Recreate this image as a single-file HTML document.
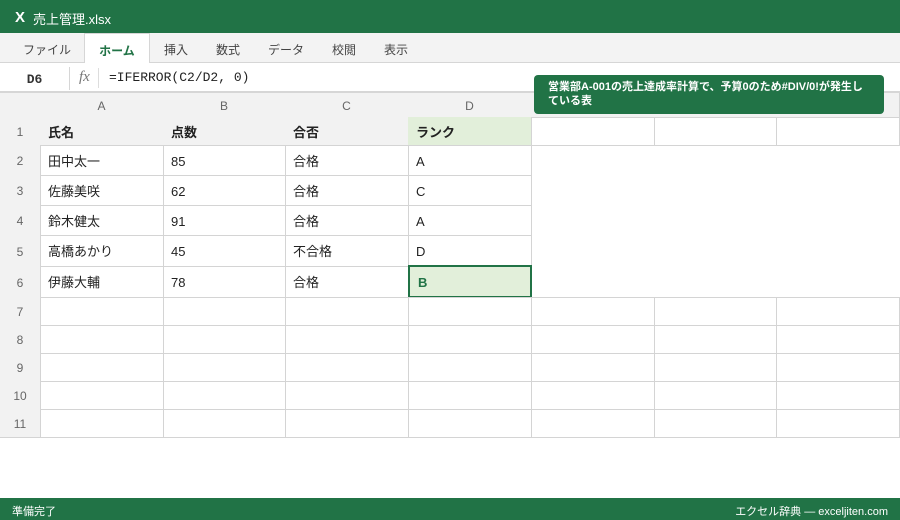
<!DOCTYPE html>
<html><head><meta charset="utf-8"><style>
*{margin:0;padding:0;box-sizing:border-box}
body{width:900px;height:520px;position:relative;overflow:hidden;background:#fff;font-family:"Liberation Sans","Noto Sans CJK JP",sans-serif;color:#333}
.a{position:absolute}
.c{position:absolute;border-right:1px solid #d4d4d4;border-bottom:1px solid #d4d4d4;font-size:13px;line-height:1;display:flex;align-items:center;padding-left:8px;padding-top:2px;color:#222}
.h{background:#f2f2f2;justify-content:center;padding-left:0;color:#666;font-size:12px}
.b{font-weight:bold;background:#f2f2f2}
.m{font-family:"Liberation Mono","Noto Sans CJK JP",monospace}
</style></head><body>
<div class="a" style="left:0;top:0;width:900px;height:33px;background:#217346;color:#fff;font-size:13px">
<span class="a" style="left:15px;top:9px;font-weight:bold;font-size:15px">X</span>
<span class="a" style="left:33px;top:9px">売上管理.xlsx</span></div>
<div class="a" style="left:0;top:33px;width:900px;height:30px;background:#f3f3f3;border-bottom:1px solid #d6d6d6;font-size:12px;color:#444">
<span class="a" style="left:23px;top:8px">ファイル</span>
<div class="a" style="left:84px;top:0;width:66px;height:31px;background:#fff;border:1px solid #d6d6d6;border-bottom:none;color:#217346;font-weight:bold;text-align:center;padding-top:8px">ホーム</div>
<span class="a" style="left:164px;top:8px">挿入</span>
<span class="a" style="left:216px;top:8px">数式</span>
<span class="a" style="left:268px;top:8px">データ</span>
<span class="a" style="left:332px;top:8px">校閲</span>
<span class="a" style="left:384px;top:8px">表示</span></div>
<div class="a" style="left:0;top:63px;width:900px;height:30px;background:#fff;border-bottom:2px solid #d6d6d6">
<div class="a m" style="left:0;top:4px;width:70px;height:23px;border-right:1px solid #d6d6d6;text-align:center;font-weight:bold;font-size:13px;padding-top:5px">D6</div>
<span class="a" style="left:79px;top:6px;font-style:italic;color:#777;font-size:15px;font-family:'Liberation Serif',serif">fx</span>
<div class="a" style="left:98px;top:5px;width:1px;height:20px;background:#ddd"></div>
<span class="a m" style="left:109px;top:7px;font-size:13px;color:#222">=IFERROR(C2/D2, 0)</span></div>
<div class="a" style="left:0;top:93px;width:900px;height:1px;background:#d4d4d4"></div>
<div class="a" style="left:0;top:93px;width:1px;height:345px;background:#d4d4d4"></div>
<div class="c h" style="left:0;top:93px;width:41px;height:25px"></div>
<div class="c h" style="left:40px;top:93px;width:124px;height:25px">A</div>
<div class="c h" style="left:163px;top:93px;width:123px;height:25px">B</div>
<div class="c h" style="left:285px;top:93px;width:124px;height:25px">C</div>
<div class="c h" style="left:408px;top:93px;width:124px;height:25px">D</div>
<div class="c h" style="left:531px;top:93px;width:124px;height:25px">E</div>
<div class="c h" style="left:654px;top:93px;width:123px;height:25px">F</div>
<div class="c h" style="left:776px;top:93px;width:124px;height:25px">G</div>
<div class="c h" style="left:0;top:117px;width:41px;height:29px">1</div>
<div class="c b" style="left:40px;top:117px;width:124px;height:29px">氏名</div>
<div class="c b" style="left:163px;top:117px;width:123px;height:29px">点数</div>
<div class="c b" style="left:285px;top:117px;width:124px;height:29px">合否</div>
<div class="c b" style="left:408px;top:117px;width:124px;height:29px;background:#e2efda">ランク</div>
<div class="c" style="left:531px;top:117px;width:124px;height:29px"></div>
<div class="c" style="left:654px;top:117px;width:123px;height:29px"></div>
<div class="c" style="left:776px;top:117px;width:124px;height:29px"></div>
<div class="c h" style="left:0;top:145px;width:41px;height:31px">2</div>
<div class="c" style="left:40px;top:145px;width:124px;height:31px">田中太一</div>
<div class="c" style="left:163px;top:145px;width:123px;height:31px">85</div>
<div class="c" style="left:285px;top:145px;width:124px;height:31px">合格</div>
<div class="c" style="left:408px;top:145px;width:124px;height:31px">A</div>
<div class="c h" style="left:0;top:175px;width:41px;height:31px">3</div>
<div class="c" style="left:40px;top:175px;width:124px;height:31px">佐藤美咲</div>
<div class="c" style="left:163px;top:175px;width:123px;height:31px">62</div>
<div class="c" style="left:285px;top:175px;width:124px;height:31px">合格</div>
<div class="c" style="left:408px;top:175px;width:124px;height:31px">C</div>
<div class="c h" style="left:0;top:205px;width:41px;height:31px">4</div>
<div class="c" style="left:40px;top:205px;width:124px;height:31px">鈴木健太</div>
<div class="c" style="left:163px;top:205px;width:123px;height:31px">91</div>
<div class="c" style="left:285px;top:205px;width:124px;height:31px">合格</div>
<div class="c" style="left:408px;top:205px;width:124px;height:31px">A</div>
<div class="c h" style="left:0;top:235px;width:41px;height:32px">5</div>
<div class="c" style="left:40px;top:235px;width:124px;height:32px">高橋あかり</div>
<div class="c" style="left:163px;top:235px;width:123px;height:32px">45</div>
<div class="c" style="left:285px;top:235px;width:124px;height:32px">不合格</div>
<div class="c" style="left:408px;top:235px;width:124px;height:32px">D</div>
<div class="c h" style="left:0;top:266px;width:41px;height:32px">6</div>
<div class="c" style="left:40px;top:266px;width:124px;height:32px">伊藤大輔</div>
<div class="c" style="left:163px;top:266px;width:123px;height:32px">78</div>
<div class="c" style="left:285px;top:266px;width:124px;height:32px">合格</div>
<div class="c" style="left:408px;top:265px;width:124px;height:33px;background:#e2efda;border:2px solid #217346;color:#217346;font-weight:bold;padding-left:8px">B</div>
<div class="a" style="left:0;top:297px;width:900px;height:1px;background:#d4d4d4"></div>
<div class="c h" style="left:0;top:297px;width:41px;height:29px">7</div>
<div class="c h" style="left:0;top:325px;width:41px;height:29px">8</div>
<div class="c h" style="left:0;top:353px;width:41px;height:29px">9</div>
<div class="c h" style="left:0;top:381px;width:41px;height:29px">10</div>
<div class="c h" style="left:0;top:409px;width:41px;height:29px">11</div>
<div class="a" style="left:40px;top:325px;width:860px;height:1px;background:#d4d4d4"></div>
<div class="a" style="left:40px;top:353px;width:860px;height:1px;background:#d4d4d4"></div>
<div class="a" style="left:40px;top:381px;width:860px;height:1px;background:#d4d4d4"></div>
<div class="a" style="left:40px;top:409px;width:860px;height:1px;background:#d4d4d4"></div>
<div class="a" style="left:40px;top:437px;width:860px;height:1px;background:#d4d4d4"></div>
<div class="a" style="left:163px;top:297px;width:1px;height:141px;background:#d4d4d4"></div>
<div class="a" style="left:285px;top:297px;width:1px;height:141px;background:#d4d4d4"></div>
<div class="a" style="left:408px;top:297px;width:1px;height:141px;background:#d4d4d4"></div>
<div class="a" style="left:531px;top:297px;width:1px;height:141px;background:#d4d4d4"></div>
<div class="a" style="left:654px;top:297px;width:1px;height:141px;background:#d4d4d4"></div>
<div class="a" style="left:776px;top:297px;width:1px;height:141px;background:#d4d4d4"></div>
<div class="a" style="left:899px;top:297px;width:1px;height:141px;background:#d4d4d4"></div>
<div class="a" style="left:534px;top:75px;width:350px;height:39px;background:#217346;border-radius:4px;color:#fff;font-size:11px;font-weight:bold;line-height:14px;padding:5px 14px">営業部A-001の売上達成率計算で、予算0のため#DIV/0!が発生している表</div>
<div class="a" style="left:0;top:498px;width:900px;height:22px;background:#217346;color:#fff;font-size:11px">
<span class="a" style="left:12px;top:5px">準備完了</span>
<span class="a" style="right:12px;top:5px">エクセル辞典 — exceljiten.com</span></div>
</body></html>
